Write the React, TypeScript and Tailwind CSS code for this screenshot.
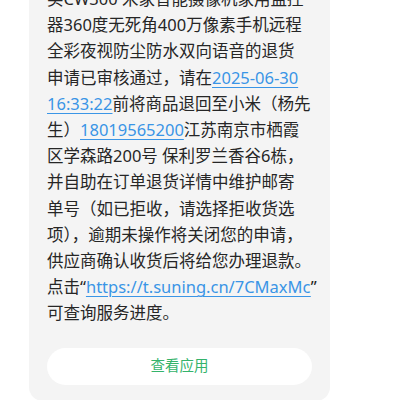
import React from 'react'

const Link = ({ children }: { children: React.ReactNode }) => (
  <span className="text-[#3a95e6] underline decoration-1 underline-offset-[3px]">{children}</span>
)

const lines: React.ReactNode[] = [
  '买CW300 米家智能摄像机家用监控',
  '器360度无死角400万像素手机远程',
  '全彩夜视防尘防水双向语音的退货',
  <>申请已审核通过，请在<Link>2025-06-30</Link></>,
  <><Link>16:33:22</Link>前将商品退回至小米（杨先</>,
  <>生）<Link>18019565200</Link>江苏南京市栖霞</>,
  '区学森路200号 保利罗兰香谷6栋，',
  '并自助在订单退货详情中维护邮寄',
  '单号（如已拒收，请选择拒收货选',
  '项），逾期未操作将关闭您的申请，',
  '供应商确认收货后将给您办理退款。',
  <>点击“<Link>https://t.suning.cn/7CMaxMc</Link>”</>,
  '可查询服务进度。',
]

const App = () => {
  return (
    <div className="h-[400px] w-[400px] overflow-hidden bg-white font-['Noto_Sans','Noto_Sans_CJK_SC',sans-serif]">
      <div className="-mt-[30px] ml-[29px] w-[301px] rounded-[14px] bg-[#f4f4f4] px-[18px] pt-[16px] pb-[16px]">
        <div className="text-[16.5px] leading-[26.2px] text-[#262626]">
          {lines.map((line, i) => (
            <div key={i} className="whitespace-nowrap">
              {line}
            </div>
          ))}
        </div>
        <button className="mt-[21px] flex h-[37px] w-full items-center justify-center rounded-full bg-white text-[14.5px] text-[#34b36b]">
          查看应用
        </button>
      </div>
    </div>
  )
}

export default App
